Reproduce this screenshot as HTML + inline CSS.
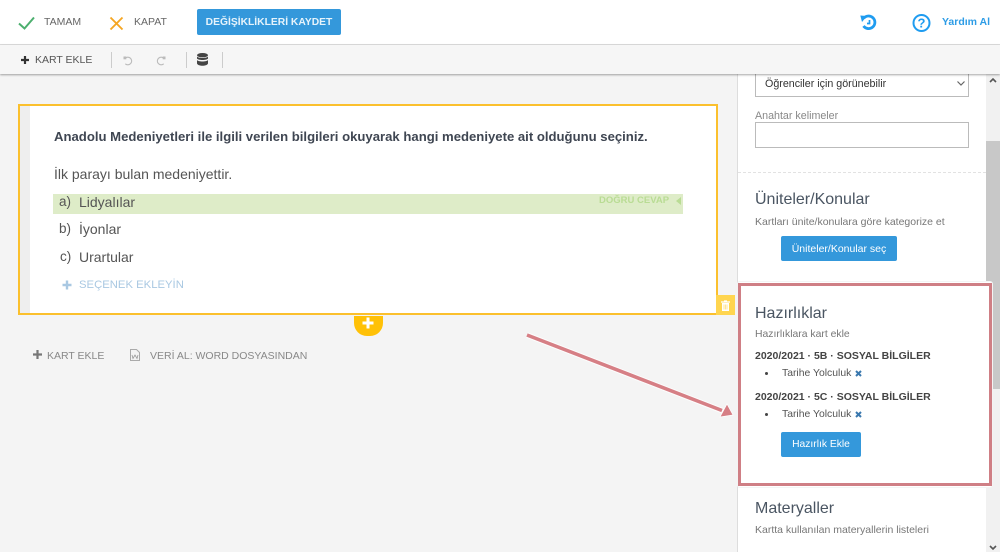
<!DOCTYPE html>
<html lang="tr"><head><meta charset="utf-8"><title>Kart</title>
<style>
html,body{margin:0;padding:0}
body{width:1000px;height:552px;overflow:hidden;background:#f4f4f4;position:relative;font-family:"Liberation Sans",sans-serif;color:#555}
.a{position:absolute;white-space:nowrap;line-height:1}
svg{position:absolute;overflow:visible}
.btn{position:absolute;background:#3498db;border-radius:2px;color:#fff;text-align:center;font-size:10.5px}
</style></head><body>

<!-- sidebar -->
<div class="a" style="left:737px;top:70px;width:249px;height:482px;background:#fff;border-left:1px solid #ddd;box-sizing:border-box"></div>
<div class="a" style="left:986px;top:70px;width:14px;height:482px;background:#f1f1f1"></div>
<div class="a" style="left:986px;top:141px;width:14px;height:248px;background:#c8c8c8"></div>
<svg style="left:986px;top:76px" width="14" height="476" viewBox="0 0 14 476"><path d="M4 6l3-3 3 3" fill="none" stroke="#555" stroke-width="1.6"/><path d="M4 470l3 3 3-3" fill="none" stroke="#555" stroke-width="1.6"/></svg>

<div class="a" style="left:755px;top:70px;width:214px;height:27px;background:#fff;border:1px solid #bbb;box-sizing:border-box"></div>
<div class="a" style="left:765px;top:78px;font-size:10.7px;color:#333;padding-top:1px">Öğrenciler için görünebilir</div>
<svg style="left:957px;top:81px" width="8" height="5"><path d="M.5.5l3.5 3.5 3.5-3.5" fill="none" stroke="#666" stroke-width="1.2"/></svg>
<div class="a" style="left:755px;top:110px;padding-top:1px;font-size:10.7px;color:#888">Anahtar kelimeler</div>
<div class="a" style="left:755px;top:122px;width:214px;height:26px;background:#fff;border:1px solid #bbb;box-sizing:border-box"></div>
<div class="a" style="left:738px;top:172px;width:248px;border-top:1px dashed #e2e2e2"></div>

<div class="a" style="left:755px;top:192px;font-size:16px;color:#4a5562">Üniteler/Konular</div>
<div class="a" style="left:755px;top:217px;font-size:10.5px;color:#777">Kartları ünite/konulara göre kategorize et</div>
<div class="btn" style="left:781px;top:236px;width:116px;height:25px;line-height:26px">Üniteler/Konular seç</div>

<!-- red box -->
<div class="a" style="left:737px;top:281px;width:256px;height:207px;background:#fff;border:1px solid #f4f4f4;border-radius:3px;box-sizing:border-box"></div>
<div class="a" style="left:738px;top:283px;width:254px;height:203px;border:3px solid #cf7f85;box-sizing:border-box;background:#fff"></div>
<div class="a" style="left:755px;top:306px;font-size:16px;color:#4a5562">Hazırlıklar</div>
<div class="a" style="left:755px;top:330px;font-size:10.4px;color:#777">Hazırlıklara kart ekle</div>
<div class="a" style="left:755px;top:351px;font-size:10.5px;font-weight:700;color:#444">2020/2021 · 5B · SOSYAL BİLGİLER</div>
<div class="a" style="left:765px;top:372px;width:3px;height:3px;border-radius:50%;background:#444"></div>
<div class="a" style="left:782px;top:367.500px;font-size:10.4px;color:#555;padding-top:1px">Tarihe Yolculuk</div>
<svg style="left:855px;top:370px" width="7" height="7"><path d="M1 1l5 5M6 1l-5 5" stroke="#3a78ae" stroke-width="2"/></svg>
<div class="a" style="left:755px;top:392px;font-size:10.5px;font-weight:700;color:#444">2020/2021 · 5C · SOSYAL BİLGİLER</div>
<div class="a" style="left:765px;top:413px;width:3px;height:3px;border-radius:50%;background:#444"></div>
<div class="a" style="left:782px;top:408.500px;font-size:10.4px;color:#555;padding-top:1px">Tarihe Yolculuk</div>
<svg style="left:855px;top:411px" width="7" height="7"><path d="M1 1l5 5M6 1l-5 5" stroke="#3a78ae" stroke-width="2"/></svg>
<div class="btn" style="left:781px;top:432px;width:80px;height:25px;line-height:26px;font-size:10.3px">Hazırlık Ekle</div>

<div class="a" style="left:755px;top:501px;font-size:16px;color:#4a5562">Materyaller</div>
<div class="a" style="left:755px;top:525px;font-size:10.5px;color:#777">Kartta kullanılan materyallerin listeleri</div>

<!-- question card -->
<div class="a" style="left:18px;top:104px;width:700px;height:211px;background:#fff;border:2px solid #fbc02d;box-sizing:border-box"></div>
<div class="a" style="left:20px;top:106px;width:10px;height:207px;background:#eee"></div>
<div class="a" style="left:54px;top:130px;font-size:13.13px;font-weight:700;color:#3f4652">Anadolu Medeniyetleri ile ilgili verilen bilgileri okuyarak hangi medeniyete ait olduğunu seçiniz.</div>
<div class="a" style="left:54px;top:167px;font-size:14px;color:#555">İlk parayı bulan medeniyettir.</div>
<div class="a" style="left:53px;top:194px;width:630px;height:20px;background:#deecc8"></div>
<div class="a" style="left:59px;top:195px;font-size:13.5px;color:#555">a)</div>
<div class="a" style="left:79px;top:195px;font-size:14px;color:#555">Lidyalılar</div>
<div class="a" style="left:599px;top:196px;font-size:9.5px;font-weight:700;color:#b9dc94">DOĞRU CEVAP</div>
<svg style="left:676px;top:197px" width="5" height="8"><path d="M5 0v8L0 4z" fill="#b9dc94"/></svg>
<div class="a" style="left:59px;top:222px;font-size:13.5px;color:#555">b)</div>
<div class="a" style="left:79px;top:222px;font-size:14px;color:#555">İyonlar</div>
<div class="a" style="left:60px;top:250px;font-size:13.5px;color:#555">c)</div>
<div class="a" style="left:79px;top:250px;font-size:14px;color:#555">Urartular</div>
<svg style="left:62px;top:280px" width="10" height="10"><path d="M5 .5v9M.5 5h9" stroke="#a9c8e2" stroke-width="2.4"/></svg>
<div class="a" style="left:79px;top:280px;font-size:11.3px;color:#a9c8e2">SEÇENEK EKLEYİN</div>

<!-- trash -->
<div class="a" style="left:716px;top:295px;width:19px;height:20px;background:#ffd54f"></div>
<svg style="left:721px;top:300px" width="9" height="11"><path d="M0 2h9M3 1h3" stroke="#fff" stroke-width="1.3"/><path d="M1 3h7v8H1z" fill="#fff"/><path d="M3 4.500v5M4.500 4.500v5M6 4.500v5" stroke="#ffd54f" stroke-width=".6"/></svg>

<!-- add tab -->
<div class="a" style="left:354px;top:316px;width:29px;height:20px;background:#ffc107;border-radius:0 0 13px 13px"></div>
<svg style="left:362px;top:317px" width="12" height="12"><path d="M6 .5v11M.5 6h11" stroke="#fff" stroke-width="3"/></svg>

<!-- footer actions -->
<svg style="left:33px;top:350px" width="9" height="9"><path d="M4.500 0v9M0 4.500h9" stroke="#777" stroke-width="2.2"/></svg>
<div class="a" style="left:47px;top:351px;font-size:10.5px;color:#888">KART EKLE</div>
<svg style="left:130px;top:349px" width="10" height="12"><path d="M.5.500h6l3 3v8H.5z" fill="none" stroke="#aaa"/><path d="M2 6l1 3.500L5 6l2 3.500L8 6" fill="none" stroke="#999" stroke-width=".8"/></svg>
<div class="a" style="left:150px;top:351px;font-size:10.5px;color:#888">VERİ AL: WORD DOSYASINDAN</div>

<!-- arrow -->
<svg style="left:0;top:0" width="1000" height="552">
<path d="M527 335L723 411" stroke="#fff" stroke-width="5.5" fill="none" opacity=".8"/>
<path d="M527 335L722 410.500" stroke="#d67f85" stroke-width="3.6" fill="none"/>
<path d="M733 415L720 417L727 404z" fill="#d67f85" stroke="#fff" stroke-width=".7"/>
</svg>

<!-- top bars -->
<div class="a" style="left:0;top:0;width:1000px;height:44px;background:#fff;border-bottom:1px solid #ddd"></div>
<div class="a" style="left:0;top:45px;width:1000px;height:29px;background:#f6f6f6;box-shadow:0 1px 2px rgba(0,0,0,.35)"></div>

<svg style="left:18px;top:16px" width="17" height="14"><path d="M1 7.500l5.500 5L16 1.500" fill="none" stroke="#4caf6e" stroke-width="2"/></svg>
<div class="a" style="left:44px;top:17px;font-size:10.5px;color:#666">TAMAM</div>
<svg style="left:110px;top:17px" width="13" height="13"><path d="M.5.500l12 12M12.500.500l-12 12" stroke="#f5a623" stroke-width="1.9"/></svg>
<div class="a" style="left:134px;top:17px;font-size:10.5px;color:#666">KAPAT</div>
<div class="btn" style="left:197px;top:9px;width:144px;height:26px;line-height:27px;font-size:10.3px;font-weight:700;color:#e6f3fb">DEĞİŞİKLİKLERİ KAYDET</div>

<svg style="left:860px;top:14px" width="17" height="17" viewBox="0 0 17 17"><path d="M3.800 4.200A6.300 6.300 0 1 1 3.500 12" fill="none" stroke="#1f9cf0" stroke-width="2.8"/><path d="M.3 1.500L7 2 2 8z" fill="#1f9cf0"/><path d="M9.500 6v3.500H7" fill="none" stroke="#1f9cf0" stroke-width="1.7"/></svg>
<svg style="left:912px;top:14px" width="19" height="18" viewBox="0 0 19 18"><circle cx="9.500" cy="9" r="8" fill="none" stroke="#1f9cf0" stroke-width="2"/><text x="9.500" y="13.500" font-family="Liberation Sans,sans-serif" font-size="13" font-weight="700" fill="#1f9cf0" text-anchor="middle">?</text></svg>
<div class="a" style="left:942px;top:17px;font-size:10.5px;font-weight:700;color:#2d9ce6">Yardım Al</div>

<svg style="left:21px;top:56px" width="8" height="8"><path d="M4 0v8M0 4h8" stroke="#333" stroke-width="2.2"/></svg>
<div class="a" style="left:35px;top:55px;font-size:10.5px;color:#555">KART EKLE</div>
<div class="a" style="left:111px;top:52px;width:1px;height:16px;background:#ccc"></div>
<svg style="left:123px;top:56px" width="10" height="10" viewBox="0 0 10 10"><path d="M2 2.500A3.800 3.800 0 1 1 2.300 7.800" fill="none" stroke="#bbb" stroke-width="1.1"/><path d="M.5 .5h2.800v2.800H.5z" fill="#bbb"/></svg>
<svg style="left:156px;top:56px" width="10" height="10" viewBox="0 0 10 10"><path d="M8 2.500A3.800 3.800 0 1 0 7.700 7.800" fill="none" stroke="#bbb" stroke-width="1.1"/><path d="M6.700 .5h2.800v2.800H6.700z" fill="#bbb"/></svg>
<div class="a" style="left:186px;top:52px;width:1px;height:16px;background:#ccc"></div>
<svg style="left:197px;top:53px" width="11" height="13" viewBox="0 0 11 13"><ellipse cx="5.500" cy="2.200" rx="5.500" ry="2.200" fill="#444"/><path d="M0 3.500c1 2 10 2 11 0v2c-1 2-10 2-11 0zM0 7c1 2 10 2 11 0v3.500c-1 3-10 3-11 0z" fill="#444"/></svg>
<div class="a" style="left:222px;top:52px;width:1px;height:16px;background:#ccc"></div>

</body></html>
